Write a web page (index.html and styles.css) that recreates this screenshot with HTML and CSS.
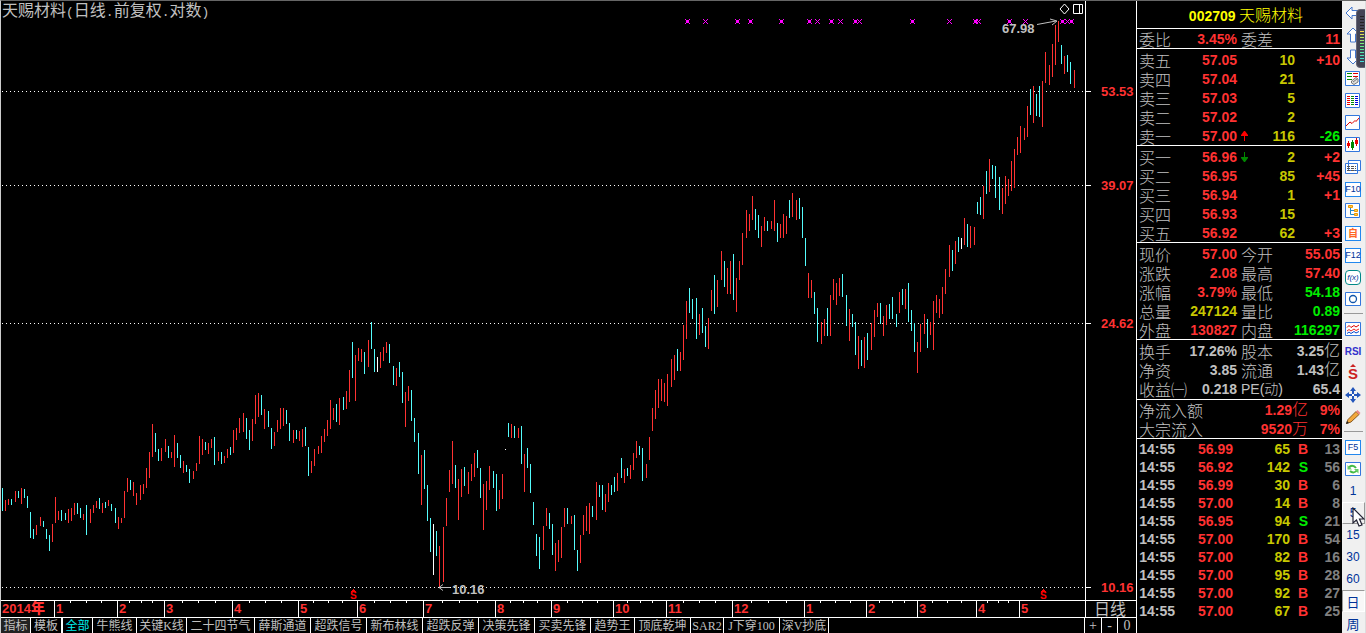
FILE: index.html
```
<!DOCTYPE html>
<html lang="zh-CN">
<head>
<meta charset="utf-8">
<title>天赐材料 002709</title>
<link rel="stylesheet" href="styles.css">
</head>
<body>
<div class="app">
  <main class="main">
    <section class="chart">
      <h1 class="chart-title">天赐材料<span class="punct">(</span>日线<span class="punct">.</span>前复权<span class="punct">.</span>对数<span class="punct">)</span></h1>
      <svg class="plot" viewBox="1 1 1135 599" role="img" aria-label="日线走势">
        <g class="grid-lines">
          <path d="M2 91.5H1085M2 185.5H1085M2 323.5H1085M2 587.5H1085"/>
        </g>
        <path class="axis" d="M1085.5 1V600M1085 91.5H1091M1085 185.5H1091M1085 323.5H1091M1085 587.5H1091"/>
        <path id="up" class="up"/>
        <path id="down" class="down"/>
        <path id="flat" class="flat"/>
        <path id="marks" class="marks"/>
        <path class="note-line" d="M439 587.5H450M443 584.5L439 587.5L443 590.5M1037 24.5L1056 21M1050 19L1057 21L1052 25"/>
        <path class="tool-line" d="M1064.500 4L1069 9L1064.500 14L1060 9ZM1073.500 4.500H1082.500V13.500H1073.500ZM1079.500 4V14"/>
        <g class="note"><text x="452" y="594">10.16</text><text x="1002" y="33">67.98</text></g>
        <g class="scale"><text x="1101" y="96">53.53</text><text x="1101" y="190">39.07</text><text x="1101" y="328">24.62</text><text x="1101" y="592">10.16</text></g>
        <g class="event"><text x="350" y="599">S</text><text x="1040" y="599">S</text><path d="M350 592L353.500 589L357 592ZM1040 592L1043.500 589L1047 592Z"/></g>
      </svg>
    </section>
    <div class="dates">
      <div class="months">
        <span class="year">2014<b class="cn">年</b></span><span>1</span><span>2</span><span>3</span><span>4</span><span>5</span><span>6</span><span>7</span><span>8</span><span>9</span><span>10</span><span>11</span><span>12</span><span>1</span><span>2</span><span>3</span><span>4</span><span class="last">5</span>
      </div>
      <div class="period">日线</div>
    </div>
    <nav class="tabs">
      <div class="tab-list">
        <button class="pressed">指标</button><button>模板</button><button class="active">全部</button><button>牛熊线</button><button>关键K线</button><button>二十四节气</button><button>薛斯通道</button><button>超跌信号</button><button>新布林线</button><button>超跌反弹</button><button>决策先锋</button><button>买卖先锋</button><button>趋势王</button><button>顶底乾坤</button><button>SAR2</button><button>J下穿100</button><button>深V抄底</button>
      </div>
      <div class="zoom"><button>+</button><button>-</button><button>0</button></div>
    </nav>
  </main>

  <aside class="quote">
    <h2 class="stock"><b>002709</b> 天赐材料</h2>
    <table class="facts bar">
      <tr><th>委比</th><td class="r">3.45%</td><th>委差</th><td class="r">11</td></tr>
    </table>
    <table class="book">
      <tr><th>卖五</th><td>57.05</td><td></td><td>10</td><td class="r">+10</td></tr>
      <tr><th>卖四</th><td>57.04</td><td></td><td>21</td><td></td></tr>
      <tr><th>卖三</th><td>57.03</td><td></td><td>5</td><td></td></tr>
      <tr><th>卖二</th><td>57.02</td><td></td><td>2</td><td></td></tr>
      <tr><th>卖一</th><td>57.00</td><td><svg class="arrow" viewBox="0 0 9 10"><path fill="#f00" d="M4 0H5L8 4V5H5V10H4V5H1V4Z"/></svg></td><td>116</td><td class="g">-26</td></tr>
    </table>
    <table class="book">
      <tr><th>买一</th><td>56.96</td><td><svg class="arrow" viewBox="0 0 9 10"><path fill="#080" d="M4 10H5L8 6V5H5V0H4V5H1V6Z"/></svg></td><td>2</td><td class="r">+2</td></tr>
      <tr><th>买二</th><td>56.95</td><td></td><td>85</td><td class="r">+45</td></tr>
      <tr><th>买三</th><td>56.94</td><td></td><td>1</td><td class="r">+1</td></tr>
      <tr><th>买四</th><td>56.93</td><td></td><td>15</td><td></td></tr>
      <tr><th>买五</th><td>56.92</td><td></td><td>62</td><td class="r">+3</td></tr>
    </table>
    <table class="facts padded">
      <tr><th>现价</th><td class="r">57.00</td><th>今开</th><td class="r">55.05</td></tr>
      <tr><th>涨跌</th><td class="r">2.08</td><th>最高</th><td class="r">57.40</td></tr>
      <tr><th>涨幅</th><td class="r">3.79%</td><th>最低</th><td class="g">54.18</td></tr>
      <tr><th>总量</th><td class="y">247124</td><th>量比</th><td class="g">0.89</td></tr>
      <tr><th>外盘</th><td class="r">130827</td><th>内盘</th><td class="g">116297</td></tr>
    </table>
    <table class="facts padded basics">
      <tr><th>换手</th><td>17.26%</td><th>股本</th><td>3.25<span class="unit">亿</span></td></tr>
      <tr><th>净资</th><td>3.85</td><th>流通</th><td>1.43<span class="unit">亿</span></td></tr>
      <tr><th>收益㈠</th><td>0.218</td><th class="pe">PE(动)</th><td>65.4</td></tr>
    </table>
    <table class="flow">
      <tr><th>净流入额</th><td>1.29<span class="unit">亿</span></td><td>9%</td></tr>
      <tr><th>大宗流入</th><td>9520<span class="unit">万</span></td><td>7%</td></tr>
    </table>
    <table class="deals">
      <tr><td>14:55</td><td>56.99</td><td>65</td><td class="r">B</td><td>13</td></tr>
      <tr><td>14:55</td><td>56.92</td><td>142</td><td class="g">S</td><td>56</td></tr>
      <tr><td>14:55</td><td>56.99</td><td>30</td><td class="r">B</td><td>6</td></tr>
      <tr><td>14:55</td><td>57.00</td><td>14</td><td class="r">B</td><td>8</td></tr>
      <tr><td>14:55</td><td>56.95</td><td>94</td><td class="g">S</td><td>21</td></tr>
      <tr><td>14:55</td><td>57.00</td><td>170</td><td class="r">B</td><td>54</td></tr>
      <tr><td>14:55</td><td>57.00</td><td>82</td><td class="r">B</td><td>16</td></tr>
      <tr><td>14:55</td><td>57.00</td><td>95</td><td class="r">B</td><td>28</td></tr>
      <tr><td>14:55</td><td>57.00</td><td>92</td><td class="r">B</td><td>27</td></tr>
      <tr><td>14:55</td><td>57.00</td><td>67</td><td class="r">B</td><td>25</td></tr>
    </table>
  </aside>

  <aside class="tools">
    <button aria-label="后退"><svg viewBox="0 0 16 16"><path class="hollow" d="M1 8L7 2V5.500H15V10.500H7V14Z"/></svg></button>
    <button aria-label="上移"><svg viewBox="0 0 16 16"><path class="hollow" d="M8 1L14 7H10.500V15H5.500V7H2Z"/></svg></button>
    <button aria-label="下移"><svg viewBox="0 0 16 16"><path class="hollow" d="M8 15L14 9H10.500V1H5.500V9H2Z"/></svg></button>
    <button aria-label="报价"><svg viewBox="0 0 16 16"><path class="frame" d="M.5 .5H14.500V14.500H.5Z"/><path stroke="#080" d="M2 2.500H7M2 5.500H7M2 8.500H7"/><path stroke="#d00" d="M8 2.500H13M8 5.500H13"/><path fill="#ddd" stroke="#777" d="M6.500 10L11 6.500L13 8V11L9 13.500L6.500 12ZM8 11L12 8"/></svg></button>
    <button aria-label="列表"><svg viewBox="0 0 16 16"><path class="frame" d="M.5 .5H14.500V14.500H.5Z"/><path stroke="#e00" d="M2 3.500H5M2 5.500H5M2 7.500H5M2 9.500H5M2 11.500H5"/><path stroke="#080" d="M6 3.500H9M6 5.500H9M6 7.500H9M6 9.500H9M6 11.500H9"/><path stroke="#00d" d="M10 3.500H13M10 5.500H13M10 7.500H13M10 9.500H13M10 11.500H13"/></svg></button>
    <button aria-label="分时"><svg viewBox="0 0 16 16"><path class="frame" d="M.5 .5H14.500V14.500H.5Z"/><path fill="none" stroke="#d00" d="M1 11L5 7L7 8.500L10 5.500L11 6.500L14 3"/></svg></button>
    <button aria-label="K线"><svg viewBox="0 0 16 16"><path class="frame" d="M.5 .5H14.500V14.500H.5Z"/><path stroke="#d00" d="M3.500 4V11M11.500 1V9"/><path stroke="#080" d="M7.500 3V13"/><path fill="#e00" d="M2 6H5V9H2ZM10 3H13V7H10Z"/><path fill="#080" d="M6 5H9V11H6Z"/></svg></button>
    <button aria-label="资讯"><svg viewBox="0 0 16 16"><path class="frame" d="M3.500 1.500H15.500V11.500H3.500ZM.5 4.500H12.500V14.500H.5Z"/><path stroke="#555" stroke-dasharray="3 1" d="M2 7.500H11M2 9.500H11M2 11.500H11"/></svg></button>
    <button class="label boxed">F10</button>
    <button aria-label="树形"><svg viewBox="0 0 16 16"><path class="frame" d="M.5 .5H14.500V14.500H.5Z"/><path fill="none" stroke="#28c" d="M5.500 5V11.500H9M5.500 7.500H9"/><path fill="#fc5" stroke="#e90" d="M3.500 2.500H7.500V4.500H3.500ZM9.500 6.500H12.500V8.500H9.500ZM9.500 10.500H12.500V12.500H9.500Z"/></svg></button>
    <button class="label boxed self">自</button>
    <button class="label boxed">F12</button>
    <button class="label boxed fx">f(x)</button>
    <button aria-label="圆"><svg viewBox="0 0 16 16"><path class="frame" d="M.5 1.500H15.500V14.500H.5Z"/><circle cx="8" cy="8" r="3.500" fill="none" stroke="#15a" stroke-width="1.300"/></svg></button>
    <hr>
    <button aria-label="叠加"><svg viewBox="0 0 16 16"><path class="frame" d="M.5 1.500H15.500V14.500H.5Z"/><path fill="none" stroke="#d00" d="M2 6.500L4 4.500L6 6.500L9 4.500L11 6L14 4"/><path fill="none" stroke="#e22" d="M2 10L4 8.500L6 10L9 8L11 9.500L14 8"/><path fill="none" stroke="#04c" d="M2 12.500L4 11L6 12.500L9 10.500L11 12L14 10.500"/></svg></button>
    <button class="label rsi">RSI</button>
    <button class="label money">S<svg class="cap" viewBox="0 0 6 3"><path fill="#c22" d="M0 3L3 0L6 3Z"/></svg></button>
    <button aria-label="移动"><svg viewBox="0 0 16 16"><path fill="#25b" d="M8 0L11 4H9V7H12V5L16 8L12 11V9H9V12H11L8 16L5 12H7V9H4V11L0 8L4 5V7H7V4H5Z"/><path fill="#fff" d="M7 7H9V9H7Z"/></svg></button>
    <button aria-label="画线"><svg viewBox="0 0 16 16"><path fill="#f3a83c" stroke="#8a5a20" d="M1.500 14.500L3 10.500L11 2.500L14 5.500L6 13Z"/><path fill="#e88" d="M11 2.500L12.500 1L15.500 4L14 5.500Z"/><path fill="#222" d="M1 15L2 12L4 14Z"/></svg></button>
    <hr>
    <button class="label boxed">F5</button>
    <button aria-label="刷新"><svg viewBox="0 0 16 16"><path class="frame" d="M.5 1.500H15.500V14.500H.5Z"/><path fill="none" stroke="#4b4" stroke-width="2" d="M4 7C5 4 9 4 11 7M12 9C11 12 7 12 5 10"/><path fill="#6c6" d="M2.500 4V8.500H7ZM13.500 12.500V8H9Z"/></svg></button>
    <button class="label">1</button>
    <button class="label hover">5</button>
    <button class="label">15</button>
    <button class="label">30</button>
    <button class="label">60</button>
    <button class="label day chosen">日</button>
    <button class="label day">周</button>
    <div class="meter"><i></i></div>
    <svg class="cursor" viewBox="0 0 13 20"><path d="M1 1V16L4.500 13L7 19L10 18L7.500 12H12Z" fill="#fff" stroke="#223" stroke-width="1.200"/></svg>
  </aside>
</div>
<script src="chart.js"></script>
</body>
</html>
```
FILE: styles.css
```
* { box-sizing: border-box; }
body { margin: 0; background: #000; color: #c0c0c0; font-family: "Liberation Sans", "Noto Sans CJK SC", sans-serif; }
button { margin: 0; padding: 0; border: 0; background: none; color: inherit; font: inherit; }
table { width: 100%; table-layout: fixed; border-collapse: separate; border-spacing: 0; }
th, td { padding: 0; white-space: nowrap; }

.app { display: grid; grid-template-columns: minmax(0, 1fr) 206px 24px; height: 100vh; border-top: 1px solid #666; border-left: 1px solid #ccc; overflow: hidden; }
.main { display: grid; grid-template-rows: minmax(0, 1fr) 17px 17px; min-width: 0; }

/* chart */
.chart { position: relative; min-height: 0; }
.chart-title { position: absolute; top: 0; left: 1px; margin: 0; font: 400 16px/16px "Noto Sans CJK SC", sans-serif; white-space: nowrap; }
.punct { font: 13px/16px "Liberation Mono", monospace; }
.plot { display: block; width: 100%; height: 100%; }
.plot path { fill: none; shape-rendering: crispEdges; }
.plot text { font-family: "Liberation Sans", sans-serif; font-weight: bold; font-size: 13px; }
.grid-lines { stroke: #fff; stroke-dasharray: 1 3; }
.axis { stroke: #fff; }
.up { stroke: #ff3232; }
.down { stroke: #54fcfc; }
.flat { stroke: #fff; }
.marks { stroke: #f0f; }
.plot .note-line { stroke: #c0c0c0; shape-rendering: auto; }
.plot .tool-line { stroke: #fff; shape-rendering: auto; }
.note { fill: #c0c0c0; }
.scale { fill: #ff3232; }
.plot .event text { fill: #f00; font-size: 10px; }
.plot .event path { fill: #f00; }

/* dates */
.dates { display: grid; grid-template-columns: minmax(0, 1fr) 51px; border-top: 1px solid #fff; }
.months { display: grid; grid-template-columns: 53fr 63fr 47fr 68fr 66fr 59fr 66fr 72fr 56fr 62fr 53fr 66fr 72fr 62fr 51fr 59fr 43fr 66fr; color: #ff3232; font-weight: bold; font-size: 13px; line-height: 16px; }
.months span { min-width: 0; padding-left: 1px; border-left: 1px solid #fff; white-space: nowrap; background: linear-gradient(#fff, #fff) 25% 0 / 1px 2px no-repeat, linear-gradient(#fff, #fff) 50% 0 / 1px 2px no-repeat, linear-gradient(#fff, #fff) 75% 0 / 1px 2px no-repeat; }
.months .year { border-left: 0; background: none; }
.months .last { background: none; }
.cn { font-size: 14px; line-height: 14px; }
.period { padding-left: 8px; border-left: 1px solid #fff; font: 400 16px/14px "Noto Sans CJK SC", sans-serif; }

/* indicator tabs */
.tabs { display: flex; justify-content: space-between; border-top: 1px solid #fff; font: 400 12px/16px "Liberation Serif", "Noto Sans CJK SC", serif; }
.tab-list { display: grid; grid-template-columns: 30px 31px 31px 44px 50px 68px repeat(6, 56px) 44px 56px 33px 56px 49px; }
.tabs button { border-right: 1px solid #fff; white-space: nowrap; }
.tabs .pressed { background: #222; }
.tabs .active { border-left: 1px solid #fff; color: #0ee; }
.zoom { display: grid; grid-template-columns: 17px 16px 18px; border-left: 1px solid #fff; font-size: 14px; }
.zoom button:last-child { border-right: 0; }

/* quote panel */
.quote { min-width: 0; border-left: 1px solid #fff; font-size: 14px; overflow: hidden; }
.quote table { border-bottom: 1px solid #fff; }
.stock { margin: 0; height: 28px; border-bottom: 1px solid #fff; padding-left: 13px; color: #ff0; text-align: center; font: 300 16px/27px "Noto Sans CJK SC", sans-serif; }
.stock b { font: bold 14px/26px "Liberation Sans", sans-serif; }
.quote tr { height: 19px; }
.quote th { text-align: left; padding-left: 2px; font: 300 16px/18px "Noto Sans CJK SC", sans-serif; }
.quote td { font-weight: bold; line-height: 18px; text-align: right; }
.quote .unit { font: 300 16px/16px "Noto Sans CJK SC", sans-serif; }
.quote .r, .flow td { color: #ff3232; }
.quote .g { color: #0e0; }
.quote .y { color: #c8c800; }
.facts.padded, .quote .book { padding-top: 1px; }
.quote .basics { padding-bottom: 1px; }
.facts th:nth-child(1) { width: 51px; }
.facts td:nth-child(2) { width: 49px; }
.facts th:nth-child(3) { width: 50px; padding-left: 4px; }
.quote .facts td:last-child, .quote .book td:last-child, .quote .flow td:last-child, .quote .deals td:last-child { padding-right: 2px; }
.quote .pe { font-family: "Liberation Sans", "Noto Sans CJK SC", sans-serif; font-size: 14px; }
.book th { width: 51px; }
.book td:nth-child(2) { width: 49px; color: #ff3232; }
.book td:nth-child(3) { width: 14px; }
.book td:nth-child(4) { width: 44px; color: #c8c800; }
.arrow { display: block; width: 9px; height: 10px; margin-left: 3px; stroke: currentColor; stroke-width: 0; }
.flow th { width: 104px; }
.flow td:nth-child(2) { width: 67px; }
.deals { margin-top: 1px; }
.quote .deals { border-bottom: 0; }
.quote .deals tr { height: 18px; }
.deals td:nth-child(1) { width: 38px; }
.deals td:nth-child(2) { width: 58px; color: #ff3232; }
.deals td:nth-child(3) { width: 57px; color: #c8c800; }
.deals td:nth-child(4) { width: 18px; }
.deals td:nth-child(5) { color: #808080; }

/* toolbar */
.tools { position: relative; display: flex; flex-direction: column; padding-top: 1px; border-right: 1px solid #ddd; background: #f0f0f0; overflow: hidden; }
.tools button { flex: none; display: flex; align-items: center; justify-content: center; height: 22px; padding-right: 1px; }
.tools button svg { width: 16px; height: 16px; }
.tools hr { flex: none; width: 19px; height: 8px; margin: 0 2px; border: 0; background: linear-gradient(#999, #999) 0 3px / 100% 1px no-repeat; }
.hollow { fill: #fff; stroke: #47c; }
.frame { fill: #fff; stroke: #37d; }
.tools .label { color: #039; font-size: 12px; }
.tools .boxed { width: 16px; height: 15px; margin: 4px 3px 3px; padding: 0; border: 1px solid #28e; background: #fff; font-size: 9px; line-height: 13px; }
.tools .self { color: #f62; font-weight: bold; font-size: 10px; }
.tools .fx { border-color: #088; border-radius: 4px; font-style: italic; font-size: 8px; }
.tools .rsi { color: #33c; font-weight: bold; font-size: 10px; }
.tools .money { position: relative; color: #c22; font-weight: bold; font-size: 15px; }
.tools .money .cap { position: absolute; top: 2px; left: 8px; width: 6px; height: 3px; }
.tools .hover { border: 1px solid #999; border-top-color: #fff; border-left-color: #fff; }
.tools .chosen { border: 1px solid #999; border-bottom-color: #fff; border-right-color: #fff; background: #f8f8f8; }
.tools .day { font-size: 13px; }
.meter { position: absolute; top: 8px; right: -3px; width: 12px; height: 59px; padding: 6px 3px; border: 1px solid #667; border-radius: 4px; background: #445; }
.meter i { display: block; height: 46px; background: repeating-linear-gradient(transparent 0 1px, #445 1px 3px), linear-gradient(#222 0 32%, #fd4 33%, #6e8 65%, #4dd); }
.cursor { position: absolute; top: 506px; left: 10px; width: 13px; height: 20px; }
```
FILE: chart.js
```
// Daily bars: kind (r = up, c = down, w = flat), x, top, bottom.
const bars = `
c2,488,511 r5,500,511 r8,499,505 c11,499,505 r15,491,502 c18,491,498 r21,488,504 c24,489,498 c27,496,508 c30,512,538
c33,529,539 r36,525,535 r40,517,526 c43,521,527 c46,529,539 c49,535,551 r52,524,542 r55,497,523 r58,511,520 c61,510,521
c65,513,520 r68,509,523 r71,508,521 r74,503,515 c77,503,514 c80,508,518 r83,514,520 c86,505,535 r90,509,523 r93,505,513
r96,501,508 c99,498,509 r102,503,513 c105,502,508 r108,500,506 c111,504,511 c115,508,523 r118,517,529 r121,518,523 r124,491,518
r127,478,492 c130,480,490 r133,482,496 r136,493,505 r140,485,500 r143,484,494 r146,468,488 r149,452,478 r152,424,457 c155,433,452
c158,449,461 r161,448,461 r165,439,452 c168,446,458 r171,452,458 r174,435,467 c177,443,458 c180,455,468 r183,461,473 c186,465,472
c189,469,483 r193,471,479 r196,463,471 r199,436,464 r202,439,455 c205,442,450 r208,443,454 r211,439,448 c214,437,465 r218,452,461
c221,452,464 r224,456,463 r227,449,458 c230,447,455 r233,430,453 r236,428,440 r239,418,433 r243,413,432 c246,418,439 c249,430,450
r252,419,441 r255,395,424 r258,393,417 c261,395,415 r264,409,429 c268,411,427 c271,428,449 r274,432,446 r277,420,432 r280,408,429
r283,408,426 c286,410,424 c289,423,441 r293,430,443 c296,430,439 r299,431,441 r302,429,447 c305,427,446 c308,447,476 r311,461,473
r314,449,466 r318,446,454 r321,436,453 r324,429,442 r327,420,436 r330,400,429 r333,408,420 c336,404,422 r339,398,425 c343,397,410
r346,391,409 r349,370,402 c352,342,378 r355,355,401 r358,348,361 r361,349,362 c364,352,374 r368,340,367 c371,322,349 c374,349,372
w377,357,372 r380,352,368 r383,347,361 r386,342,353 c389,344,363 c393,366,385 r396,368,386 c399,362,377 c402,372,403 r405,392,427
r408,386,401 c411,390,421 c414,418,442 c418,433,474 r421,455,505 c424,450,489 c427,485,521 c430,518,552 w433,524,575 c436,531,556
r439,546,587 r443,527,582 r446,498,526 r449,470,492 r452,441,484 c455,465,488 r458,479,520 r461,469,497 c464,467,486 r468,472,494
r471,464,481 r474,453,477 c477,450,468 c480,468,498 r483,484,530 r486,481,510 r489,466,490 c493,471,488 c496,474,511 r499,490,509
r502,474,499 w505,449,450 c508,423,437 r511,424,438 c514,426,438 r518,428,438 c521,426,464 r524,454,492 c527,448,468 c530,464,493
c533,502,525 c536,534,556 c539,537,569 r543,526,550 r546,508,526 c549,513,529 c552,524,555 r555,543,571 r558,540,562 r561,527,558
r564,508,527 c567,508,524 r571,516,524 c574,515,550 c577,550,571 r580,535,563 r583,515,535 r586,506,531 r589,503,534 c592,506,517
r596,482,520 c599,485,497 c602,485,510 r605,494,512 r608,483,502 c611,485,495 c614,477,492 r617,473,491 c621,458,478 r624,469,483
c627,468,476 r630,465,479 r633,453,470 r636,441,458 c639,446,455 c642,448,481 r646,464,478 r649,437,460 r652,408,431 r655,390,419
r658,379,408 r661,379,401 r664,383,402 r667,374,406 r671,359,387 r674,355,380 c677,349,371 r680,352,371 r683,325,360 r686,301,339
c689,288,313 c692,299,319 c696,298,339 r699,314,335 c702,308,333 c705,326,347 r708,318,349 r711,290,311 c714,275,314 r717,280,307
r721,251,280 c724,261,287 r727,268,294 r730,261,294 c733,254,300 r736,278,312 r739,261,280 r742,233,265 r746,210,238 r749,214,231
r752,196,220 c755,209,230 c758,215,238 r761,226,247 r764,217,231 c767,221,231 r771,221,229 r774,200,231 c777,223,242 r780,224,238
r783,214,238 r786,216,234 c789,200,218 r792,193,217 r796,200,220 c799,198,219 c802,207,238 c805,238,266 r808,273,298 r811,280,298
c814,292,314 c817,308,342 r821,322,344 r824,319,336 c827,308,336 r830,295,336 r833,279,300 r836,283,305 r839,278,296 c842,274,297
c846,295,326 r849,309,341 c852,314,327 c855,322,355 r858,336,369 c861,340,366 r864,337,368 c867,333,360 r871,323,350 r874,310,337
r877,303,317 c880,303,324 r883,316,336 r886,305,325 c889,304,319 c892,297,319 c896,314,327 r899,292,313 c902,289,305 r905,289,309
c908,283,322 c911,310,331 c914,323,352 r917,342,373 r920,324,352 r924,314,334 c927,319,348 r930,322,335 r933,301,350 r936,295,313
r939,299,318 r942,287,314 r945,269,294 r949,245,277 c952,250,271 r955,241,264 c958,237,252 w961,238,249 r964,218,245 c967,224,247
r970,226,248 r974,227,245 c977,202,214 c980,197,215 r983,186,219 c986,171,194 r989,159,192 c992,165,179 c995,166,198 c999,177,210
r1002,188,214 r1005,176,204 r1008,179,196 r1011,161,191 r1014,149,188 r1017,137,155 r1020,126,153 r1024,128,140 r1027,106,137 c1030,89,115
r1033,86,123 c1036,94,116 c1039,86,117 r1042,81,127 r1045,52,83 r1049,65,85 r1052,44,77 r1055,25,65 r1058,21,42 c1061,45,64
r1064,56,74 c1067,55,72 c1070,62,84 r1074,70,88`;

const paths = { r: '', c: '', w: '' };
for (const bar of bars.trim().split(/\s+/)) {
  const [x, top, bottom] = bar.slice(1).split(',').map(Number);
  paths[bar[0]] += `M${x + 0.5} ${top}V${bottom}`;
}
document.getElementById('up').setAttribute('d', paths.r);
document.getElementById('down').setAttribute('d', paths.c);
document.getElementById('flat').setAttribute('d', paths.w);

// Event crosses along the top; the second list has filled centres.
const cross = x => `M${x - 2} 19L${x + 3} 24M${x + 3} 19L${x - 2} 24`;
const light = [705, 817, 840, 859, 949, 978, 1025, 1067];
const heavy = [687, 737, 750, 781, 809, 831, 855, 912, 975, 1009, 1062, 1071];
document.getElementById('marks').setAttribute('d',
  light.map(cross).join('') + heavy.map(x => cross(x) + `M${x - 1} 20.5H${x + 2}M${x - 1} 21.5H${x + 2}M${x - 1} 22.5H${x + 2}`).join(''));
```
